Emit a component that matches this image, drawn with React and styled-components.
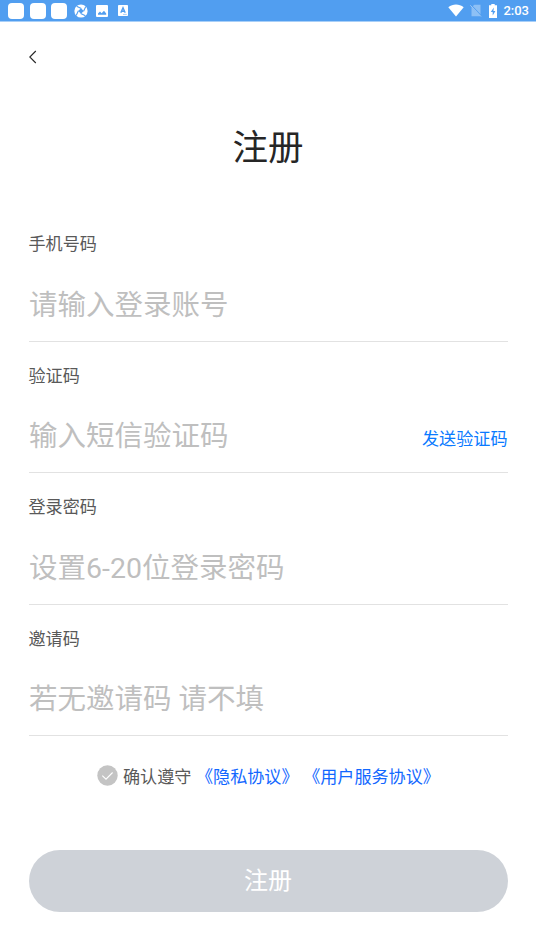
import React from 'react';
import styled, { createGlobalStyle } from 'styled-components';

const GlobalStyle = createGlobalStyle`
    * {
        box-sizing: border-box;
    }
    body {
        margin: 0;
        background: #ffffff;
        font-family: Roboto, "Noto Sans CJK SC", sans-serif;
        text-spacing-trim: space-all;
    }
`;

const Page = styled.div`
    display: flex;
    flex-direction: column;
    height: 952px;
    overflow: hidden;
`;

const StatusBar = styled.div`
    display: flex;
    align-items: center;
    justify-content: space-between;
    height: 22px;
    padding: 0 7px 0 8px;
    background: #519ef0;
    border-bottom: 1px solid #a8cff8;
    flex-shrink: 0;
`;

const StatusGroup = styled.div`
    display: flex;
    align-items: center;
    gap: ${(props) => props.$gap || '0'};
    height: 21px;
    svg {
        display: block;
    }
`;

const AppSquare = styled.span`
    width: 16px;
    height: 16px;
    background: #ffffff;
    border-radius: 4px;
`;

const Clock = styled.span`
    color: #ffffff;
    font-size: 13px;
    font-weight: 500;
    line-height: 21px;
`;

const NavBar = styled.div`
    display: flex;
    align-items: center;
    height: 70.5px;
    padding-left: 28px;
    flex-shrink: 0;
`;

const BackButton = styled.button`
    display: flex;
    padding: 0;
    border: none;
    background: none;
`;

const Title = styled.h1`
    margin: 28px 0 0;
    height: 89.5px;
    color: #262626;
    font-size: 35.5px;
    font-weight: 400;
    line-height: 54px;
    text-align: center;
`;

const Form = styled.form`
    display: flex;
    flex-direction: column;
    padding: 0 28.5px;
`;

const Field = styled.div`
    display: flex;
    flex-direction: column;
    height: 131.5px;
    padding-top: 22px;
    border-bottom: 1px solid #e2e2e2;
`;

const Label = styled.label`
    color: #595959;
    font-size: 17.1px;
    line-height: 24px;
`;

const InputRow = styled.div`
    display: flex;
    align-items: center;
    height: 48px;
    margin-top: 25px;
`;

const Input = styled.input`
    flex: 1;
    min-width: 0;
    height: 48px;
    padding: 0 0 0 0.5px;
    border: none;
    outline: none;
    background: none;
    color: #262626;
    font-family: inherit;
    font-size: 28.5px;
    &::placeholder {
        color: #bfbfbf;
        opacity: 1;
    }
`;

const SendCode = styled.button`
    margin-top: 5px;
    padding: 0;
    border: none;
    background: none;
    color: #0a7aff;
    font-family: inherit;
    font-size: 17.1px;
    line-height: 24px;
`;

const Agreement = styled.div`
    display: flex;
    align-items: center;
    height: 24px;
    margin: 29px 0 0 68px;
    color: #595959;
    font-size: 17.1px;
    line-height: 24px;
    white-space: nowrap;
    svg {
        display: block;
        margin: 0 5.5px 3px 0;
    }
`;

const AgreementLink = styled.a`
    margin-left: 4.6px;
    color: #1267ff;
`;

const SubmitButton = styled.button`
    height: 62px;
    margin-top: 61px;
    padding: 0;
    border: none;
    border-radius: 31px;
    background: #ced2d8;
    color: #ffffff;
    font-family: inherit;
    font-size: 24px;
    line-height: 62px;
`;

const fields = [
    { id: 'phone', label: '手机号码', placeholder: '请输入登录账号' },
    { id: 'code', label: '验证码', placeholder: '输入短信验证码', action: '发送验证码' },
    { id: 'password', label: '登录密码', placeholder: '设置6-20位登录密码' },
    { id: 'invite', label: '邀请码', placeholder: '若无邀请码 请不填' },
];

const ShutterIcon = () => (
    <svg width="14" height="14" viewBox="0 0 14 14">
        <circle cx="7" cy="7" r="6.6" fill="#fff" />
        <path d="M7 4.2 9.8 7 7 9.8 4.2 7z" fill="#519ef0" />
        <path d="M7.3 4.4 2.6 2.2M9.6 7.3 11.8 2.6M6.7 9.6 11.4 11.8M4.4 6.7 2.2 11.4" stroke="#519ef0" strokeWidth="1.1" />
    </svg>
);

const ImageIcon = () => (
    <svg width="12" height="12" viewBox="0 0 12 12">
        <rect width="12" height="12" rx="1" fill="#fff" />
        <path d="M2 9.7V8.6l2-2 1.6 1.7L8 5.8l2.2 2.8v1.1z" fill="#519ef0" />
    </svg>
);

const LetterIcon = () => (
    <svg width="10" height="11" viewBox="0 0 10 11">
        <rect width="10" height="11" rx=".8" fill="#fff" />
        <path d="M2.8 7.8 5 2.8l2.2 5M3.6 6.3h2.8" fill="none" stroke="#519ef0" strokeWidth="1.4" />
        <path d="M5 9.4h3.8" stroke="#519ef0" strokeWidth=".5" />
    </svg>
);

const WifiIcon = () => (
    <svg width="16" height="13" viewBox="0 0 16 13">
        <path d="M.3 3.3C4.8-.4 11.2-.4 15.7 3.3L8 12.6z" fill="#fff" />
    </svg>
);

const NoSimIcon = () => (
    <svg width="12" height="13" viewBox="0 0 12 13">
        <path d="M4.3.8h6.2v11.4h-9V3.6z" fill="#fff" opacity=".35" />
        <path d="M.6 1 11.4 12.2" stroke="#519ef0" strokeWidth="1.6" />
        <path d="M.3 1.3 11 12.5" stroke="#fff" strokeWidth=".9" opacity=".5" />
    </svg>
);

const BatteryIcon = () => (
    <svg width="8" height="14" viewBox="0 0 8 14">
        <path d="M2.3 0h3.4v1.3H8V14H0V1.3h2.3z" fill="#fff" />
        <path d="M4.9 3.4 1.7 8h2v3.5L6.4 7h-2z" fill="#519ef0" />
    </svg>
);

const App = () => {
    return (
        <Page>
            <GlobalStyle />
            <StatusBar>
                <StatusGroup $gap="7px">
                    <StatusGroup $gap="5.5px">
                        <AppSquare />
                        <AppSquare />
                        <AppSquare />
                    </StatusGroup>
                    <StatusGroup $gap="10px">
                        <StatusGroup $gap="8px">
                            <ShutterIcon />
                            <ImageIcon />
                        </StatusGroup>
                        <LetterIcon />
                    </StatusGroup>
                </StatusGroup>
                <StatusGroup $gap="6.5px">
                    <WifiIcon />
                    <NoSimIcon />
                    <BatteryIcon />
                    <Clock>2:03</Clock>
                </StatusGroup>
            </StatusBar>
            <NavBar>
                <BackButton type="button">
                    <svg width="9" height="14" viewBox="0 0 9 14">
                        <path d="M7.8 1 1.8 7l6 6" fill="none" stroke="#262626" strokeWidth="1.1" />
                    </svg>
                </BackButton>
            </NavBar>
            <Title>注册</Title>
            <Form>
                {fields.map((field) => (
                    <Field key={field.id}>
                        <Label htmlFor={field.id}>{field.label}</Label>
                        <InputRow>
                            <Input id={field.id} placeholder={field.placeholder} />
                            {field.action && <SendCode type="button">{field.action}</SendCode>}
                        </InputRow>
                    </Field>
                ))}
                <Agreement>
                    <svg width="21" height="21" viewBox="0 0 21 21">
                        <circle cx="10.5" cy="10.5" r="10.2" fill="#c4c4c4" />
                        <path d="M5.3 10.6 9 14.2l6.6-6.7" fill="none" stroke="#fff" strokeWidth="1.1" />
                    </svg>
                    <span>确认遵守</span>
                    <AgreementLink>《隐私协议》</AgreementLink>
                    <AgreementLink>《用户服务协议》</AgreementLink>
                </Agreement>
                <SubmitButton type="button">注册</SubmitButton>
            </Form>
        </Page>
    );
};

export default App;
